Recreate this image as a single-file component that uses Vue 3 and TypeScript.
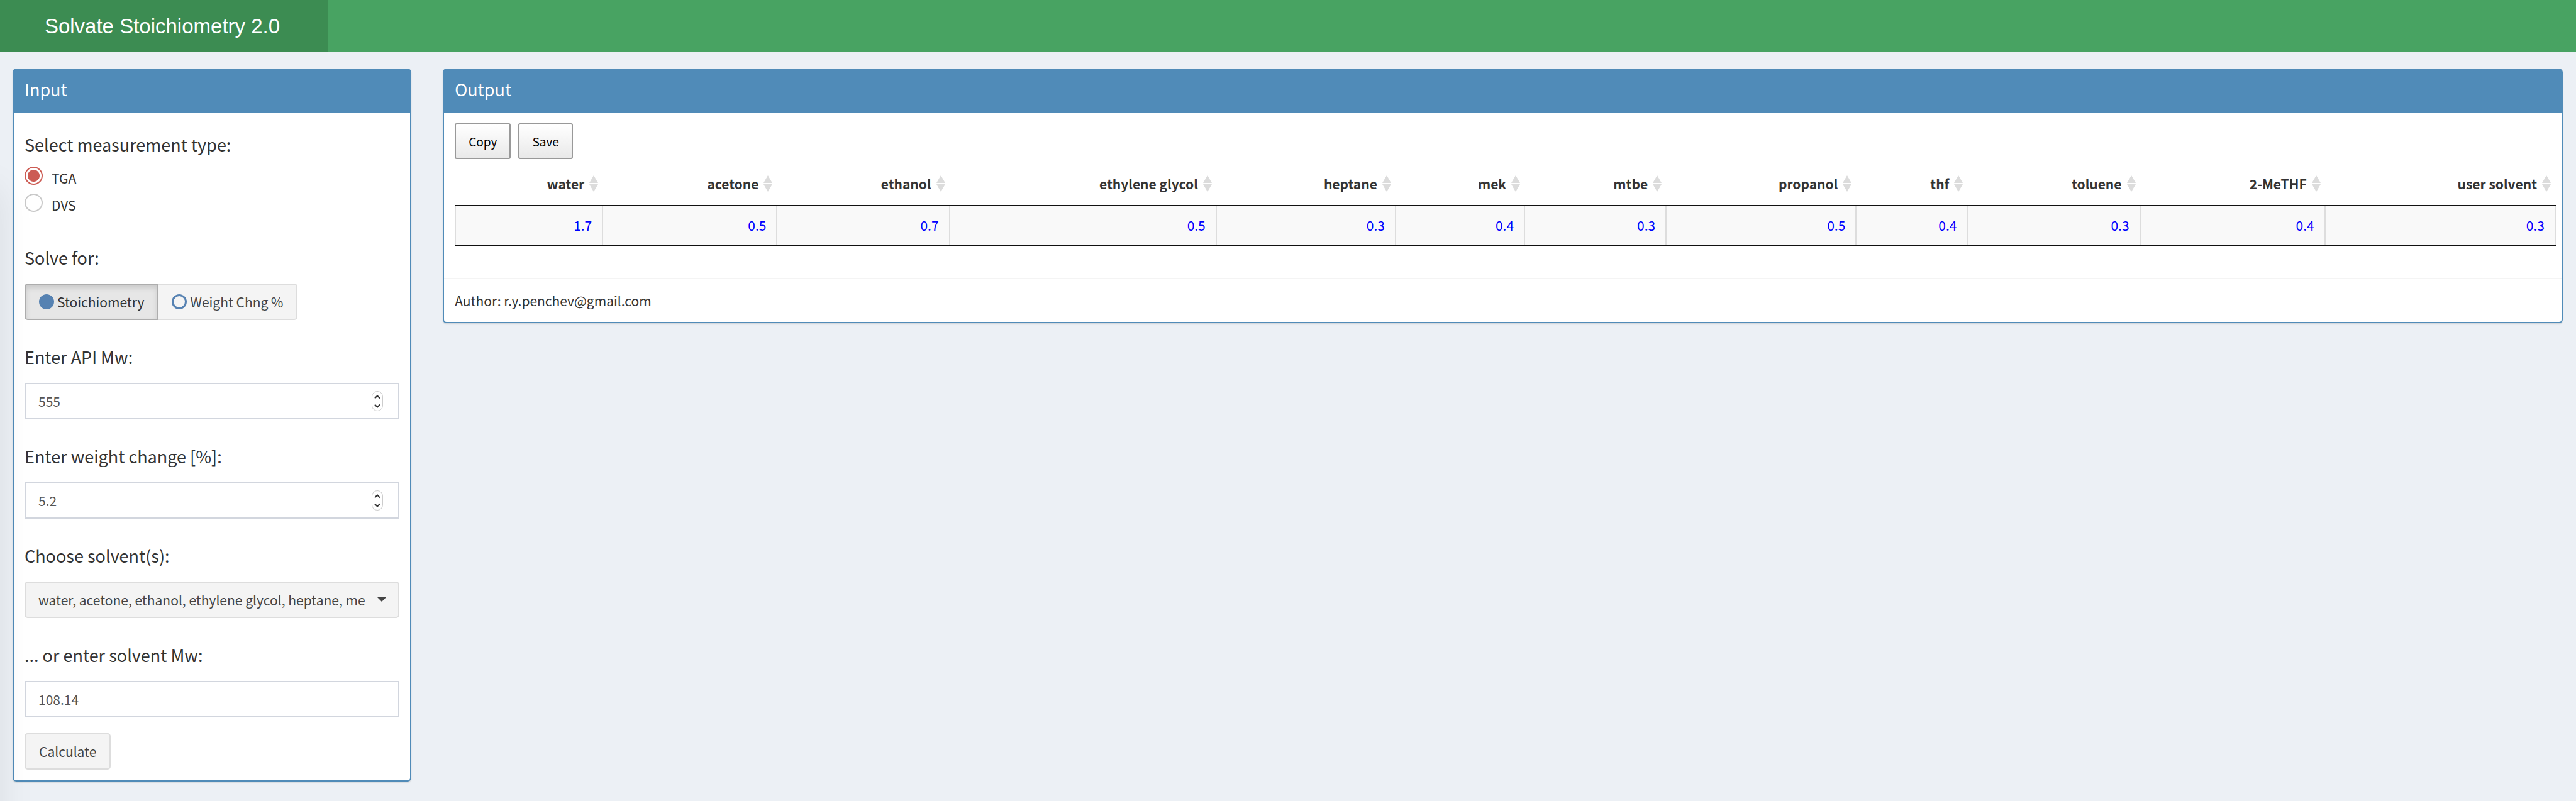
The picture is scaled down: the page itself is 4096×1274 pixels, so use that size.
<script setup lang="ts">
import { ref } from 'vue'

interface Solvent {
  name: string
  value: string
  share: number
}

const solvents: Solvent[] = [
  { name: 'water', value: '1.7', share: 236 },
  { name: 'acetone', value: '0.5', share: 277 },
  { name: 'ethanol', value: '0.7', share: 274 },
  { name: 'ethylene glycol', value: '0.5', share: 424 },
  { name: 'heptane', value: '0.3', share: 285 },
  { name: 'mek', value: '0.4', share: 205 },
  { name: 'mtbe', value: '0.3', share: 225 },
  { name: 'propanol', value: '0.5', share: 302 },
  { name: 'thf', value: '0.4', share: 177 },
  { name: 'toluene', value: '0.3', share: 274 },
  { name: '2-MeTHF', value: '0.4', share: 294 },
  { name: 'user solvent', value: '0.3', share: 366 },
]
const totalShare = solvents.reduce((sum, s) => sum + s.share, 0)

const measurement = ref('TGA')
const solveFor = ref('stoich')
const apiMw = ref(555)
const weightChange = ref(5.2)
const solventMw = ref('108.14')

function step(target: 'api' | 'weight', delta: number) {
  if (target === 'api') apiMw.value += delta
  else weightChange.value = Math.round((weightChange.value + delta) * 10) / 10
}
</script>

<template>
  <div class="page">
    <header class="topbar">
      <span class="logo">Solvate Stoichiometry 2.0</span>
    </header>

    <main class="content">
      <section class="box">
        <h3 class="box-title">Input</h3>
        <form class="form" @submit.prevent>
          <fieldset class="group radios">
            <legend class="label">Select measurement type:</legend>
            <label class="radio"><input v-model="measurement" type="radio" name="measurement" value="TGA"><span>TGA</span></label>
            <label class="radio"><input v-model="measurement" type="radio" name="measurement" value="DVS"><span>DVS</span></label>
          </fieldset>

          <fieldset class="group">
            <legend class="label">Solve for:</legend>
            <div class="segments">
              <label class="segment" :class="{ active: solveFor === 'stoich' }">
                <input v-model="solveFor" type="radio" name="solve" value="stoich"><span>Stoichiometry</span>
              </label>
              <label class="segment" :class="{ active: solveFor === 'weight' }">
                <input v-model="solveFor" type="radio" name="solve" value="weight"><span>Weight Chng %</span>
              </label>
            </div>
          </fieldset>

          <div class="group">
            <label class="label" for="api">Enter API Mw:</label>
            <div class="number">
              <input id="api" v-model.number="apiMw" class="field" type="number">
              <span class="spinner">
                <button type="button" aria-label="Increase API Mw" @click="step('api', 1)"><svg viewBox="0 0 10 8"><path d="M1 6.5 5 2.5l4 4" /></svg></button>
                <button type="button" aria-label="Decrease API Mw" @click="step('api', -1)"><svg viewBox="0 0 10 8"><path d="M1 1.5 5 5.5l4-4" /></svg></button>
              </span>
            </div>
          </div>

          <div class="group">
            <label class="label" for="weight">Enter weight change [%]:</label>
            <div class="number">
              <input id="weight" v-model.number="weightChange" class="field" type="number" step="0.1">
              <span class="spinner">
                <button type="button" aria-label="Increase weight change" @click="step('weight', 0.1)"><svg viewBox="0 0 10 8"><path d="M1 6.5 5 2.5l4 4" /></svg></button>
                <button type="button" aria-label="Decrease weight change" @click="step('weight', -0.1)"><svg viewBox="0 0 10 8"><path d="M1 1.5 5 5.5l4-4" /></svg></button>
              </span>
            </div>
          </div>

          <div class="group">
            <label class="label" for="solvents">Choose solvent(s):</label>
            <div class="picker">
              <select id="solvents" class="select">
                <option>water, acetone, ethanol, ethylene glycol, heptane, me</option>
              </select>
              <svg class="caret" viewBox="0 0 14 7"><path d="M0 0h14L7 7z" /></svg>
            </div>
          </div>

          <div class="group">
            <label class="label" for="user-mw">... or enter solvent Mw:</label>
            <input id="user-mw" v-model="solventMw" class="field" type="text">
          </div>

          <button class="calculate" type="submit">Calculate</button>
        </form>
      </section>

      <section class="box">
        <h3 class="box-title">Output</h3>
        <div class="output">
          <div class="tools">
            <button class="tool" type="button">Copy</button>
            <button class="tool" type="button">Save</button>
          </div>
          <table class="results">
            <colgroup>
              <col v-for="s in solvents" :key="s.name" :style="{ width: (s.share / totalShare) * 100 + '%' }">
            </colgroup>
            <thead>
              <tr>
                <th v-for="s in solvents" :key="s.name" scope="col">
                  <span class="head">{{ s.name }}<svg class="sort" viewBox="0 0 14 26"><path d="M7 0l7 12H0zM7 26l7-12H0z" /></svg></span>
                </th>
              </tr>
            </thead>
            <tbody>
              <tr>
                <td v-for="s in solvents" :key="s.name">{{ s.value }}</td>
              </tr>
            </tbody>
          </table>
        </div>
        <footer class="box-footer">Author: r.y.penchev@gmail.com</footer>
      </section>
    </main>
    <div class="edge-shade"></div>
  </div>
</template>

<style>
body {
  margin: 0;
  background: #ecf0f5;
}
</style>

<style scoped>
.page {
  position: relative;
  min-height: 100vh;
  overflow: hidden;
  background: #ecf0f5;
  color: #333;
  font: 21px/30px "Noto Sans CJK SC", "Open Sans", sans-serif;
}
.page *,
.page *::before {
  box-sizing: border-box;
}
input,
select,
button {
  margin: 0;
  font: inherit;
  color: inherit;
}
.topbar {
  display: flex;
  height: 83px;
  background: #48a362;
}
.logo {
  width: 522px;
  padding-right: 6px;
  background: #3c8c52;
  color: #fff;
  font: 33px/83px "Liberation Sans", sans-serif;
  text-align: center;
}
.content {
  display: grid;
  grid-template-columns: calc((100% - 250px) / 6) minmax(0, 1fr);
  gap: 50px;
  align-items: start;
  padding: 26px 21px 30px 20px;
}
.box {
  border: 2px solid #508bb8;
  border-radius: 6px;
  background: #fff;
  box-shadow: 0 2px 2px rgba(0, 0, 0, 0.1);
}
.box-title {
  margin: 0;
  padding: 14px 17px 20px;
  background: #508bb8;
  color: #fff;
  font-size: 27px;
  font-weight: 400;
  line-height: 34px;
}
.form {
  padding: 34px 17px 17px;
}
.group {
  display: flow-root;
  min-width: 0;
  height: 158px;
  margin: 0;
  padding: 0;
  border: 0;
}
.group.radios {
  height: 180px;
}
.label {
  display: block;
  padding: 0;
  margin-bottom: 24px;
  font-size: 27px;
  line-height: 34px;
}
.radios .label {
  margin-bottom: 18px;
}
.radio {
  display: flex;
  gap: 14px;
  height: 43px;
}
.radio input {
  appearance: none;
  width: 29px;
  height: 29px;
  border: 2px solid #c9c9c9;
  border-radius: 50%;
  background: #fff;
}
.radio input:checked {
  border-color: #cc5c54;
  background: radial-gradient(circle, #cc5c54 9px, #fff 10px);
}
.radio span {
  padding-top: 3px;
}
.segments {
  display: flex;
}
.segment {
  display: flex;
  align-items: center;
  gap: 5px;
  height: 58px;
  padding: 0 21px;
  border: 2px solid #ddd;
  border-left: 0;
  border-radius: 0 5px 5px 0;
  background: #f4f4f4;
  color: #444;
}
.segment.active {
  border: 2px solid #adadad;
  border-radius: 5px 0 0 5px;
  background: #e6e6e6;
  box-shadow: inset 0 5px 9px rgba(0, 0, 0, 0.125);
  color: #333;
}
.segment input {
  appearance: none;
  width: 24px;
  height: 24px;
  border: 3px solid #5682b2;
  border-radius: 50%;
}
.segment input:checked {
  background: #5682b2;
}
.number,
.picker {
  position: relative;
}
.field {
  display: block;
  width: 100%;
  height: 58px;
  padding: 0 20px;
  border: 2px solid #d2d6de;
  border-radius: 0;
  background: #fff;
  color: #555;
  appearance: textfield;
}
.field::-webkit-inner-spin-button {
  display: none;
}
.spinner {
  position: absolute;
  top: 13px;
  right: 26px;
  display: flex;
  flex-direction: column;
  width: 18px;
  height: 32px;
  border: 1px solid #ccc;
  border-radius: 9px;
  background: #fff;
}
.spinner button {
  display: flex;
  flex: 1;
  align-items: center;
  justify-content: center;
  padding: 0;
  border: 0;
  background: none;
}
.spinner svg {
  width: 10px;
  height: 8px;
  fill: none;
  stroke: #333;
  stroke-width: 2;
}
.select {
  display: block;
  width: 100%;
  height: 58px;
  padding: 0 0 0 20px;
  border: 2px solid #ddd;
  border-radius: 5px;
  background: #f4f4f4;
  color: #444;
  appearance: none;
}
.caret {
  position: absolute;
  top: 25px;
  right: 21px;
  width: 14px;
  height: 7px;
  fill: #444;
  pointer-events: none;
}
.calculate {
  display: block;
  height: 58px;
  margin-top: -17px;
  padding: 0 21px;
  border: 2px solid #ddd;
  border-radius: 5px;
  background: #f4f4f4;
  color: #444;
}
.output {
  padding: 17px 9px 17px 17px;
}
.tools {
  display: flex;
  gap: 12px;
}
.tool {
  height: 57px;
  padding: 0 20px;
  border: 2px solid #999;
  border-radius: 3px;
  background: linear-gradient(#fff, #e9e9e9);
  color: #000;
  font-size: 19px;
}
.results {
  width: 100%;
  border-collapse: separate;
  border-spacing: 0;
  border-bottom: 2px solid #111;
  table-layout: fixed;
  text-align: right;
}
th {
  height: 75px;
  padding: 4px 8px 0 0;
  border-bottom: 2px solid #111;
  font-weight: 700;
  white-space: nowrap;
}
.head {
  display: inline-flex;
  align-items: center;
  gap: 8px;
}
.sort {
  width: 14px;
  height: 26px;
  fill: #dcdcdc;
}
td {
  height: 61px;
  padding: 0 16px 2px;
  border-right: 2px solid #ddd;
  background: #f9f9f9;
  color: #00f;
}
td:first-child {
  border-left: 2px solid #ddd;
}
.box-footer {
  margin-top: 34px;
  padding: 19px 17px;
  border-top: 2px solid #f4f4f4;
}
.edge-shade {
  position: absolute;
  top: 300px;
  bottom: -60px;
  left: -200px;
  width: 200px;
  box-shadow: 0 0 54px rgba(0, 0, 0, 0.08);
  pointer-events: none;
}
</style>
